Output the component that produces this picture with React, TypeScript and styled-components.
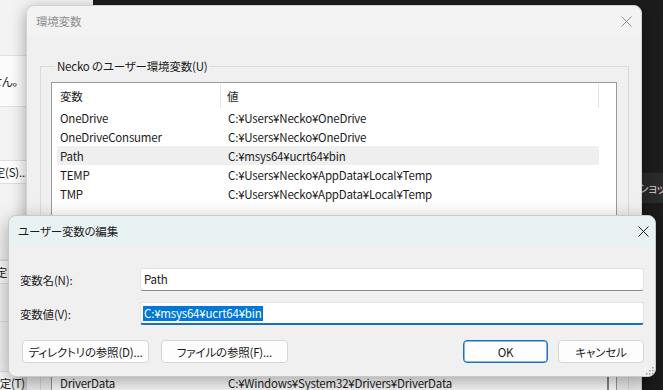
import styled, { createGlobalStyle } from 'styled-components';

const GlobalStyle = createGlobalStyle`
  html, body {
    margin: 0;
    padding: 0;
    background: #1c1c1c;
  }
  body {
    font-family: "Noto Sans CJK JP", "Noto Sans", sans-serif;
    font-size: 11.5px;
    letter-spacing: -0.2px;
    color: #1b1b1b;
    font-feature-settings: "palt";
  }
`;

const Desktop = styled.div`
  position: relative;
  width: 663px;
  height: 390px;
  overflow: hidden;
  background: #1c1c1c;
`;

/* settings window peeking out on the left */
const SideWindow = styled.div`
  position: absolute;
  left: 0;
  top: 0;
  width: 93px;
  height: 390px;
  background: #f3f3f3;
  display: flex;
  flex-direction: column;
`;

const SideRow = styled.div<{ $h: number; $bg?: string; $line?: boolean; $pr?: number }>`
  flex: none;
  height: ${({ $h }) => $h}px;
  background: ${({ $bg }) => $bg ?? 'transparent'};
  border-bottom: ${({ $line }) => ($line ? '1px solid #e2e2e2' : 'none')};
  box-sizing: border-box;
  display: flex;
  align-items: center;
  justify-content: flex-end;
  overflow: hidden;
  white-space: nowrap;
  padding-right: ${({ $pr }) => $pr ?? 0}px;
  line-height: 16px;
`;

const SideButton = styled.div<{ $pr: number }>`
  flex: none;
  height: 24px;
  margin-right: ${({ $pr }) => $pr}px;
  background: #fdfdfd;
  border: 1px solid #dedede;
  border-left: none;
  box-sizing: border-box;
  display: flex;
  align-items: center;
  justify-content: flex-end;
  overflow: hidden;
  white-space: nowrap;
  padding-right: 8px;
`;

const DarkStrip = styled.div`
  position: absolute;
  left: 636px;
  top: 173px;
  width: 27px;
  height: 30px;
  background: #2b2b2b;
  color: #d4d4d4;
  display: flex;
  align-items: center;
  padding-left: 2px;
  white-space: nowrap;
  overflow: hidden;
  box-sizing: border-box;
`;

/* 環境変数 dialog (inactive, behind) */
const BackDialog = styled.div`
  position: absolute;
  left: 26px;
  top: 5px;
  width: 616px;
  height: 420px;
  background: #f0f0f0;
  border: 1px solid #d2d2d2;
  border-radius: 8px 8px 0 0;
  box-sizing: border-box;
  display: flex;
  flex-direction: column;
  box-shadow: 0 4px 16px rgba(0, 0, 0, 0.35);
`;

const TitleBar = styled.div<{ $active?: boolean }>`
  flex: none;
  height: 30px;
  display: flex;
  align-items: center;
  justify-content: space-between;
  padding-left: 9px;
  background: ${({ $active }) => ($active ? '#e9f2f3' : '#f3f3f3')};
  color: ${({ $active }) => ($active ? '#1b1b1b' : '#8d8d8d')};
  border-radius: 8px 8px 0 0;
  line-height: 16px;
`;

const CloseBox = styled.div<{ $w: number }>`
  width: ${({ $w }) => $w}px;
  height: 30px;
  display: flex;
  align-items: center;
  justify-content: center;
`;

const BackBody = styled.div`
  padding: 22px 12px 0 13px;
  display: flex;
  flex-direction: column;
  gap: 10px;
`;

const GroupBox = styled.fieldset`
  margin: 0;
  padding: 0 11px 10px 10px;
  border: 1px solid #dadada;
  border-radius: 0;
  min-width: 0;
`;

const Legend = styled.legend`
  margin-left: 4px;
  padding: 0 2px;
  line-height: 16px;
  color: #1b1b1b;
`;

const ListView = styled.div<{ $h: number }>`
  position: relative;
  margin-top: 8px;
  height: ${({ $h }) => $h}px;
  background: #fff;
  border: 1px solid #9a9a9a;
  overflow: hidden;
`;

const ListHeader = styled.div`
  display: grid;
  grid-template-columns: 169px 378px 1fr;
  height: 25px;
  align-items: stretch;
`;

const HeaderCell = styled.div<{ $pl: number; $divider?: boolean }>`
  display: flex;
  align-items: center;
  padding-left: ${({ $pl }) => $pl}px;
  margin: 1px 0 0;
  border-right: ${({ $divider }) => ($divider ? '1px solid #e5e5e5' : 'none')};
`;

const ListRow = styled.div<{ $selected?: boolean }>`
  display: grid;
  grid-template-columns: 164px 1fr;
  margin-left: 5px;
  width: 542px;
  height: 19px;
  align-items: center;
  background: ${({ $selected }) => ($selected ? '#efefef' : 'transparent')};
  white-space: nowrap;
  line-height: 16px;
`;

const Cell = styled.div<{ $pl: number }>`
  padding-left: ${({ $pl }) => $pl}px;
  overflow: hidden;
`;

const ScrollThumb = styled.div`
  position: absolute;
  right: 7px;
  top: 34px;
  width: 2px;
  height: 90px;
  border-radius: 1px;
  background: #858585;
`;

const ButtonRow = styled.div`
  display: flex;
  gap: 10px;
  margin-top: 9px;
`;

const Spread = styled.div`
  flex: 1;
`;

const Button = styled.div<{ $w: number; $primary?: boolean }>`
  flex: none;
  width: ${({ $w }) => $w}px;
  height: 23px;
  box-sizing: border-box;
  display: flex;
  align-items: center;
  justify-content: center;
  background: #fdfdfd;
  border: 1px solid ${({ $primary }) => ($primary ? '#1f6fc5' : '#d6d6d6')};
  box-shadow: ${({ $primary }) => ($primary ? 'inset 0 0 0 0.5px #1f6fc5' : 'none')};
  border-radius: 4px;
  color: #1b1b1b;
  line-height: 16px;
  white-space: nowrap;
`;

/* ユーザー変数の編集 dialog (active, front) */
const EditDialog = styled.div`
  position: absolute;
  left: 8px;
  top: 215px;
  width: 648px;
  height: 162px;
  background: #f0f0f0;
  border: 1px solid #c9c9c9;
  border-radius: 8px;
  box-sizing: border-box;
  display: flex;
  flex-direction: column;
  box-shadow: 0 6px 20px rgba(0, 0, 0, 0.35);
`;

const EditBody = styled.div`
  flex: 1;
  position: relative;
  padding: 22px 11px 0 11px;
  display: flex;
  flex-direction: column;
`;

const FieldGrid = styled.div`
  display: grid;
  grid-template-columns: 120px 1fr;
  row-gap: 11px;
  align-items: center;
`;

const FieldLabel = styled.div`
  line-height: 16px;
`;

const TextBox = styled.div<{ $focused?: boolean }>`
  height: 23px;
  box-sizing: border-box;
  background: #fff;
  border: 1px solid #e3e3e3;
  border-bottom: ${({ $focused }) => ($focused ? '2px solid #1a6fc4' : '1px solid #8a8a8a')};
  border-radius: 3px;
  display: flex;
  align-items: center;
  padding-left: ${({ $focused }) => ($focused ? 2 : 3)}px;
  line-height: 15px;
  white-space: nowrap;
`;

const Selection = styled.span`
  background: #0078d7;
  color: #fff;
  padding: 0 1px;
  line-height: 15px;
`;

const EditButtons = styled(ButtonRow)`
  margin-top: 15px;
  margin-left: 2px;
  gap: 12px;
`;

const Grip = styled.svg`
  position: absolute;
  right: 1px;
  bottom: 1px;
`;

const CloseIcon = ({ color, size }: { color: string; size: number }) => (
  <svg width={size} height={size} viewBox="0 0 10 10">
    <path d="M0.5 0.5 L9.5 9.5 M9.5 0.5 L0.5 9.5" stroke={color} strokeWidth="0.9" fill="none" />
  </svg>
);

const userVars = [
  { name: 'OneDrive', value: 'C:¥Users¥Necko¥OneDrive' },
  { name: 'OneDriveConsumer', value: 'C:¥Users¥Necko¥OneDrive' },
  { name: 'Path', value: 'C:¥msys64¥ucrt64¥bin', selected: true },
  { name: 'TEMP', value: 'C:¥Users¥Necko¥AppData¥Local¥Temp' },
  { name: 'TMP', value: 'C:¥Users¥Necko¥AppData¥Local¥Temp' },
];

const systemVars = [
  { name: 'ComSpec', value: 'C:¥Windows¥system32¥cmd.exe' },
  { name: 'DriverData', value: 'C:¥Windows¥System32¥Drivers¥DriverData' },
  { name: 'NUMBER_OF_PROCESSORS', value: '8' },
];

const App = () => (
  <>
    <GlobalStyle />
    <Desktop>
      <SideWindow>
        <SideRow $h={55} />
        <SideRow $h={52} $bg="#fbfbfb" $line $pr={75} style={{ borderTop: '1px solid #e2e2e2' }}>
          環境変数は設定されていません。
        </SideRow>
        <SideRow $h={53} />
        <SideButton $pr={56}>システムの詳細設定(S)...</SideButton>
        <SideRow $h={76} $line />
        <SideButton $pr={77}>起動と回復の設定</SideButton>
        <SideRow $h={38} $line />
        <SideRow $h={49} />
        <SideButton $pr={59}>既定(T)</SideButton>
      </SideWindow>

      <DarkStrip>ショット</DarkStrip>

      <BackDialog>
        <TitleBar>
          環境変数
          <CloseBox $w={30}>
            <CloseIcon color="#8d8d8d" size={11} />
          </CloseBox>
        </TitleBar>
        <BackBody>
          <GroupBox>
            <Legend>Necko のユーザー環境変数(U)</Legend>
            <ListView $h={167}>
              <ListHeader>
                <HeaderCell $pl={8} $divider>変数</HeaderCell>
                <HeaderCell $pl={6} $divider>値</HeaderCell>
                <HeaderCell $pl={0} />
              </ListHeader>
              {userVars.map((v) => (
                <ListRow key={v.name} $selected={v.selected}>
                  <Cell $pl={3}>{v.name}</Cell>
                  <Cell $pl={7}>{v.value}</Cell>
                </ListRow>
              ))}
            </ListView>
            <ButtonRow>
              <Spread />
              <Button $w={85}>新規(N)...</Button>
              <Button $w={85}>編集(E)...</Button>
              <Button $w={85}>削除(D)</Button>
            </ButtonRow>
          </GroupBox>
          <GroupBox>
            <Legend>システム環境変数(S)</Legend>
            <ListView $h={150}>
              <ListHeader>
                <HeaderCell $pl={8} $divider>変数</HeaderCell>
                <HeaderCell $pl={6} $divider>値</HeaderCell>
                <HeaderCell $pl={0} />
              </ListHeader>
              {systemVars.map((v) => (
                <ListRow key={v.name}>
                  <Cell $pl={3}>{v.name}</Cell>
                  <Cell $pl={7}>{v.value}</Cell>
                </ListRow>
              ))}
              <ScrollThumb />
            </ListView>
          </GroupBox>
        </BackBody>
      </BackDialog>

      <EditDialog>
        <TitleBar $active>
          ユーザー変数の編集
          <CloseBox $w={24}>
            <CloseIcon color="#1b1b1b" size={11} />
          </CloseBox>
        </TitleBar>
        <EditBody>
          <FieldGrid>
            <FieldLabel>変数名(N):</FieldLabel>
            <TextBox>Path</TextBox>
            <FieldLabel>変数値(V):</FieldLabel>
            <TextBox $focused>
              <Selection>C:¥msys64¥ucrt64¥bin</Selection>
            </TextBox>
          </FieldGrid>
          <EditButtons>
            <Button $w={127}>ディレクトリの参照(D)...</Button>
            <Button $w={127}>ファイルの参照(F)...</Button>
            <Spread />
            <Button $w={85} $primary>OK</Button>
            <Button $w={86} style={{ marginLeft: -2 }}>キャンセル</Button>
          </EditButtons>
          <Grip width="9" height="9" viewBox="0 0 9 9">
            {[
              [7, 1],
              [4, 4],
              [7, 4],
              [1, 7],
              [4, 7],
              [7, 7],
            ].map(([x, y]) => (
              <rect key={`${x}-${y}`} x={x} y={y} width="1.5" height="1.5" fill="#9a9a9a" />
            ))}
          </Grip>
        </EditBody>
      </EditDialog>
    </Desktop>
  </>
);

export default App;
